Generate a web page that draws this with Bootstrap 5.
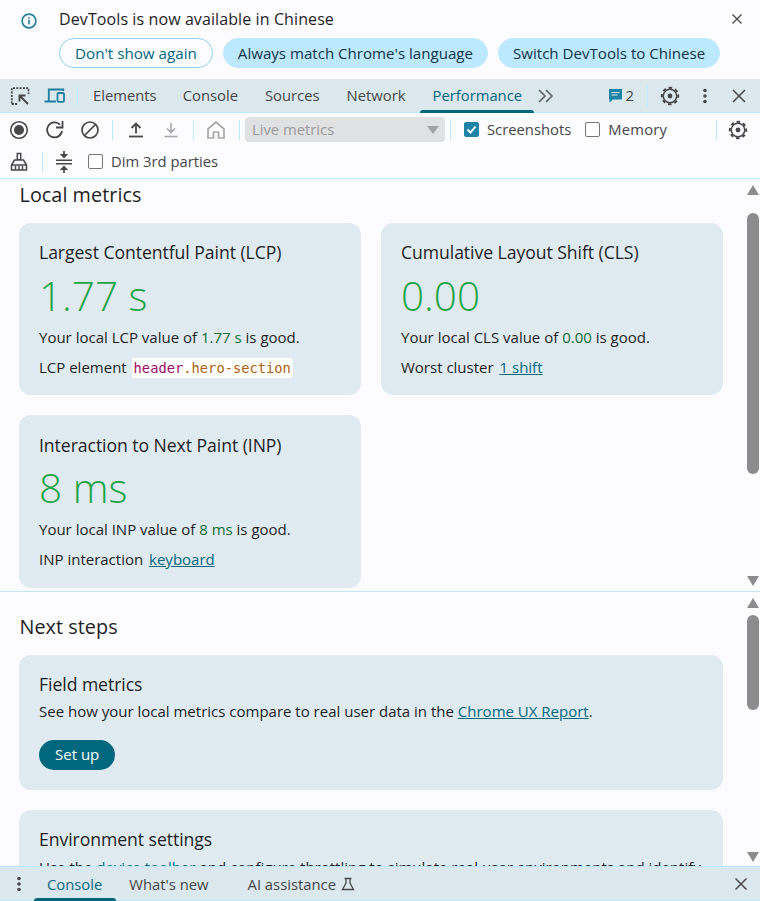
<!DOCTYPE html>
<html lang="en"><head><meta charset="utf-8"><title>DevTools</title>
<link rel="stylesheet" href="https://cdn.jsdelivr.net/npm/bootstrap@5.3.0/dist/css/bootstrap.min.css">
<style>
html,body{height:100%;overflow:hidden}
body{background:#fcfcff;color:#1f1f1f;font-family:"Open Sans","Noto Sans",sans-serif;font-size:15px}
svg{display:block;flex:none}
.sprite{position:absolute}
.shell{height:901px;width:760px}
.infobar{height:79px;padding:8px 0 0 20px}
.info-col{padding-left:21px}
.info-close{margin-right:16px}
.info-text{font-size:16px;line-height:22px;letter-spacing:.1px}
.pill-row{column-gap:10px}
.pill{height:30px;border-radius:15px;padding:0 14px;font-size:15.1px;line-height:29px;border:1px solid #bce9ff;background:#bce9ff;color:#12333f;white-space:nowrap}
.pill-outline{padding:0 15px;background:transparent;border-color:#8dd3f2;color:#00677e;font-size:15.2px}
.tabstrip{height:34px;background:#dbe8ee;border-bottom:1px solid #bce9ff;flex:none}
.tabname{font-size:14.8px;color:#474747;white-space:nowrap;line-height:33px;height:33px;position:relative}
.tabname.is-on{color:#00677e}
.tabname.is-on::after{content:"";position:absolute;left:-13px;right:-12px;bottom:-1px;height:3px;background:#00677d;border-radius:3px 3px 0 0}
.vsep{width:1px;height:20px;background:#bce9ff;flex:none}
.toolrow{height:33px;flex:none}
.toolrow-low{height:32px;flex:none;padding-bottom:1px}
.tool-label{font-size:14.8px;color:#474747;white-space:nowrap}
.label-wide{letter-spacing:.2px}
.fake-box{width:15px;height:15px;border:1px solid #747775;border-radius:2px;background:#fff;flex:none}
.fake-box.on{background:#1f83a6;border-color:#1f83a6;display:flex;align-items:center;justify-content:center}
.select-box{width:200px;height:25px;background:#e0e1e3;border-radius:4px;color:#9a9a9c;font-size:14.8px;padding:0 6px 0 7px}
.tri{width:0;height:0;border-left:6px solid transparent;border-right:6px solid transparent;border-top:8px solid #a1a1a1}
.toolwrap{border-bottom:1px solid #bce9ff;height:66px;flex:none}
.pane{overflow:hidden;flex:none}
.pane-a{height:413px;border-bottom:1px solid #c3e6f5}
.pane-b{height:274px}
.pane-body{flex:1;min-width:0;padding-left:19px;overflow:hidden}
.sbar{width:37px;flex:none;padding-left:24px;padding-right:1px}
.thumb{width:12px;background:#8c8c8c;border-radius:6px;flex:none}
.thumb-a{height:261px;margin-top:18px}
.thumb-b{height:95px;margin-top:7px}
.up,.dn{width:0;height:0;border-left:6.5px solid transparent;border-right:6.5px solid transparent;flex:none}
.up{border-bottom:10px solid #8c8c8c;margin-top:6px}
.dn{border-top:10px solid #8c8c8c;margin-top:auto;margin-bottom:5px}
.dn-b{margin-bottom:4px}
.heading{font-size:19.8px;line-height:26px;color:#1f1f1f;padding-left:.5px;letter-spacing:.05px}
.heading-a{margin-top:3px}
.heading-b{margin-top:22px}
.metric-grid{display:grid;grid-template-columns:342px 342px;gap:20px;width:704px;margin-top:15px}
.tile{background:#dfebf1;border-radius:12px;padding:17px 20px 0;height:172px}
.tile-low{height:173px;padding-top:18px}
.tile-low .big-val{margin-top:6px}
.tile-field{width:704px;height:135px;margin-top:15px}
.tile-env{width:704px;height:120px;margin-top:20px}
.tile-title{font-size:17.6px;line-height:24px;letter-spacing:-.05px;white-space:nowrap}
.big-val{font-size:40.500px;font-weight:350;line-height:50px;color:#1ea446;margin-top:7px}
.tile-line{font-size:15px;line-height:20px;white-space:nowrap;overflow:visible}
.line-a{margin-top:6px}
.line-b{margin-top:10px}
.line-c{margin-top:5px}
.line-clip{margin-top:6px;overflow:hidden}
.good{color:#136c2e}
.dlink{color:#00677e;text-decoration:underline;margin-left:2px}
.dlink-flush{margin-left:0}
.codechip{background:#fff;border-radius:3px;padding:2px;font:13.75px/18px "DejaVu Sans Mono",monospace;margin-left:1px}
.code-tag{color:#9c0d62}
.code-cls{color:#ad5f0c}
.setup{display:inline-block;height:30px;border-radius:15px;background:#00677e;color:#fff;padding:0 16px;font-size:15px;line-height:29px;margin-top:19px}
.drawer{height:35px;background:#dbe8ee;border-top:1px solid #bce9ff;border-bottom:1px solid #bce9ff;flex:none}
.drawer .tabname{line-height:35px}
.drawer .tabname.is-on::after{left:-13px;right:-14px}
.gl3{margin-left:3px}.gl5{margin-left:5px}.gl8{margin-left:8px}.gl9{margin-left:9px}.gl10{margin-left:10px}.gl11{margin-left:11px}.gl12{margin-left:12px}.gl13{margin-left:13px}.gl14{margin-left:14px}.gl15{margin-left:15px}.gl16{margin-left:16px}.gl17{margin-left:17px}.gl23{margin-left:23px}.gl25{margin-left:25px}.gl26{margin-left:26px}.gl27{margin-left:27px}.gl39{margin-left:39px}
.gr12{margin-right:12px}.gr13{margin-right:13px}.gr14{margin-right:14px}
</style></head>
<body>
<div class="shell d-flex flex-column">
 <div class="infobar d-flex flex-shrink-0">
  <svg width="18" height="18" viewBox="0 0 18 18" class="mt-1"><circle cx="9" cy="9" r="6.900" fill="none" stroke="#1f7f9d" stroke-width="1.600"/><rect x="8.200" y="8" width="1.600" height="4.400" fill="#1f7f9d"/><rect x="8.200" y="5.300" width="1.600" height="1.600" fill="#1f7f9d"/></svg>
  <div class="flex-grow-1 info-col">
   <div class="d-flex justify-content-between align-items-center"><span class="info-text">DevTools is now available in Chinese</span>
    <svg width="14" height="14" viewBox="0 0 14 14" class="info-close"><path d="M2.500 2.500l9 9m0-9l-9 9" stroke="#474747" stroke-width="1.300" fill="none"/></svg></div>
   <div class="d-flex mt-2 pill-row"><span class="pill pill-outline">Don't show again</span><span class="pill">Always match Chrome's language</span><span class="pill">Switch DevTools to Chinese</span></div>
  </div>
 </div>
 <div class="tabstrip d-flex align-items-center">
  <svg width="20" height="20" viewBox="0 0 20 20" class="gl10"><path d="M1.800 17.500V2.200H18.500V8M1.800 18H8" stroke="#474747" stroke-width="1.800" fill="none" stroke-dasharray="2 1.300"/><path d="M18 18L10 10M9.500 15.500V9.500h6" stroke="#474747" stroke-width="1.900" fill="none"/></svg>
  <svg width="21" height="20" viewBox="0 0 21 20" class="gl14"><path d="M4.800 15V3.500h14.500V5M.5 15.500H12" stroke="#1f7f9d" stroke-width="1.800" fill="none"/><rect x="13.500" y="7" width="6.500" height="8.800" rx="1" fill="none" stroke="#1f7f9d" stroke-width="1.800"/></svg>
  <span class="vsep gl12"></span>
  <span class="tabname gl15">Elements</span>
  <span class="tabname gl26">Console</span>
  <span class="tabname gl27">Sources</span>
  <span class="tabname gl27">Network</span>
  <span class="tabname is-on gl27">Performance</span>
  <svg width="18" height="16" viewBox="0 0 18 16" class="gl15"><path d="M2 2L8 8l-6 6M9 2L15 8l-6 6" stroke="#5f6368" stroke-width="1.600" fill="none"/></svg>
  <svg width="15" height="15" viewBox="0 0 15 15" class="ms-auto"><path d="M1 1h13v10.500H5L1.500 14.500V11.500H1z" fill="#1f83a6"/><path d="M3.500 4.500h8M3.500 7h6" stroke="#dbe8ee" stroke-width="1.200"/></svg>
  <span class="tabname gl3 gr13">2</span>
  <span class="vsep"></span>
  <svg width="20" height="20" viewBox="0 0 20 20" class="gl12"><use href="#gearIcon"/></svg>
  <svg width="4" height="16" viewBox="0 0 4 16" class="gl23"><circle cx="2" cy="2.500" r="1.800" fill="#474747"/><circle cx="2" cy="8" r="1.800" fill="#474747"/><circle cx="2" cy="13.500" r="1.800" fill="#474747"/></svg>
  <svg width="14" height="14" viewBox="0 0 14 14" class="gl25 gr14"><path d="M1 1l12 12m0-12l-12 12" stroke="#474747" stroke-width="1.500" fill="none"/></svg>
 </div>
 <div class="toolwrap">
  <div class="toolrow d-flex align-items-center">
   <svg width="20" height="20" viewBox="0 0 20 20" class="gl9"><circle cx="10" cy="10" r="8.300" fill="none" stroke="#474747" stroke-width="1.600"/><circle cx="10" cy="10" r="5" fill="#474747"/></svg>
   <svg width="20" height="20" viewBox="0 0 20 20" class="gl16"><path d="M17 11a7.500 7.500 0 1 1-2-6.300" stroke="#474747" stroke-width="1.800" fill="none"/><path d="M17.500 1v6.500H11" stroke="#474747" stroke-width="1.800" fill="none"/></svg>
   <svg width="20" height="20" viewBox="0 0 20 20" class="gl15"><circle cx="10" cy="10" r="8" fill="none" stroke="#474747" stroke-width="1.700"/><path d="M4.500 15.500l11-11" stroke="#474747" stroke-width="1.700"/></svg>
   <span class="vsep gl12"></span>
   <svg width="18" height="18" viewBox="0 0 18 18" class="gl14"><path d="M9 12.500V3M4.500 7L9 2.500 13.500 7" stroke="#474747" stroke-width="1.800" fill="none"/><path d="M2 15.500h14" stroke="#474747" stroke-width="1.800"/></svg>
   <svg width="18" height="18" viewBox="0 0 18 18" class="gl17"><path d="M9 2v9.500M5 7.500l4 4 4-4" stroke="#a8a8a8" stroke-width="1.600" fill="none"/><path d="M2.500 15.500h13" stroke="#a8a8a8" stroke-width="1.600"/></svg>
   <span class="vsep gl13"></span>
   <svg width="20" height="20" viewBox="0 0 20 20" class="gl12"><path d="M2 9L10 2l8 7v9h-5.500v-6h-5v6H2z" fill="none" stroke="#a8a8a8" stroke-width="1.700"/></svg>
   <span class="vsep gl13"></span>
   <div class="select-box d-flex align-items-center justify-content-between gl5">Live metrics<span class="tri"></span></div>
   <span class="vsep gl5"></span>
   <span class="fake-box on gl13"><svg width="11" height="11" viewBox="0 0 11 11"><path d="M1.500 5.500l3 3 5-6" stroke="#fff" stroke-width="1.900" fill="none"/></svg></span>
   <span class="tool-label gl8">Screenshots</span>
   <span class="fake-box gl14"></span>
   <span class="tool-label label-wide gl8">Memory</span>
   <span class="vsep ms-auto"></span>
   <svg width="20" height="20" viewBox="0 0 20 20" class="gl11 gr12"><use href="#gearIcon"/></svg>
  </div>
  <div class="toolrow-low d-flex align-items-center">
   <svg width="20" height="20" viewBox="0 0 20 20" class="gl9"><path d="M8.300 1.500h3.400v6.300H8.300zM5.500 8h9l3 5v5h-15v-5zM2.500 13h15" fill="none" stroke="#474747" stroke-width="1.500"/><path d="M6.500 14v4M10 14v4M13.500 14v4" stroke="#474747" stroke-width="1.500"/></svg>
   <span class="vsep gl13"></span>
   <svg width="20" height="24" viewBox="0 0 20 24" class="gl11"><path d="M2 10.300h16M2 13.700h16" stroke="#474747" stroke-width="1.400"/><path d="M10 1v4" stroke="#474747" stroke-width="1.700"/><path d="M5.800 4h8.400L10 8.500zM5.800 20h8.400L10 15.500z" fill="#474747"/><path d="M10 19v4" stroke="#474747" stroke-width="1.700"/></svg>
   <span class="fake-box gl14"></span>
   <span class="tool-label gl8">Dim 3rd parties</span>
  </div>
 </div>
 <div class="pane pane-a d-flex">
  <div class="pane-body">
   <div class="heading heading-a">Local metrics</div>
   <div class="metric-grid">
    <div class="tile">
     <div class="tile-title">Largest Contentful Paint (LCP)</div>
     <div class="big-val">1.77 s</div>
     <div class="tile-line line-a">Your local LCP value of <span class="good">1.77 s</span> is good.</div>
     <div class="tile-line line-b">LCP element <span class="codechip"><span class="code-tag">header</span><span class="code-cls">.hero-section</span></span></div>
    </div>
    <div class="tile">
     <div class="tile-title">Cumulative Layout Shift (CLS)</div>
     <div class="big-val">0.00</div>
     <div class="tile-line line-a">Your local CLS value of <span class="good">0.00</span> is good.</div>
     <div class="tile-line line-b">Worst cluster <span class="dlink">1 shift</span></div>
    </div>
    <div class="tile tile-low">
     <div class="tile-title">Interaction to Next Paint (INP)</div>
     <div class="big-val">8 ms</div>
     <div class="tile-line line-a">Your local INP value of <span class="good">8 ms</span> is good.</div>
     <div class="tile-line line-b">INP interaction <span class="dlink">keyboard</span></div>
    </div>
   </div>
  </div>
  <div class="sbar d-flex flex-column">
   <span class="up"></span>
   <span class="thumb thumb-a"></span>
   <span class="dn"></span>
  </div>
 </div>
 <div class="pane pane-b d-flex">
  <div class="pane-body">
   <div class="heading heading-b">Next steps</div>
   <div class="tile tile-field">
    <div class="tile-title">Field metrics</div>
    <div class="tile-line line-c">See how your local metrics compare to real user data in the <span class="dlink dlink-flush">Chrome UX Report</span>.</div>
    <span class="setup">Set up</span>
   </div>
   <div class="tile tile-env">
    <div class="tile-title">Environment settings</div>
    <div class="tile-line line-clip">Use the <span class="dlink dlink-flush">device toolbar</span> and configure throttling to simulate real user environments and identify</div>
   </div>
  </div>
  <div class="sbar d-flex flex-column">
   <span class="up"></span>
   <span class="thumb thumb-b"></span>
   <span class="dn dn-b"></span>
  </div>
 </div>
 <div class="drawer d-flex align-items-center">
  <svg width="4" height="16" viewBox="0 0 4 16" class="gl17"><circle cx="2" cy="2.500" r="1.800" fill="#474747"/><circle cx="2" cy="8" r="1.800" fill="#474747"/><circle cx="2" cy="13.500" r="1.800" fill="#474747"/></svg>
  <span class="tabname is-on gl26">Console</span>
  <span class="tabname gl27">What's new</span>
  <span class="tabname gl39">AI assistance</span>
  <svg width="14" height="14" viewBox="0 0 14 14" class="gl5"><path d="M3.500 1.500h7M5 1.500V6L1.500 12.500h11L9 6V1.500" fill="none" stroke="#474747" stroke-width="1.300"/></svg>
  <svg width="14" height="14" viewBox="0 0 14 14" class="ms-auto gr12"><path d="M1.500 1.500l11 11m0-11l-11 11" stroke="#474747" stroke-width="1.500" fill="none"/></svg>
 </div>
</div>
<svg width="0" height="0" class="sprite"><defs><g id="gearIcon"><circle cx="10" cy="10" r="8.200" fill="none" stroke="#474747" stroke-width="2" stroke-dasharray="3.400 3.040" transform="rotate(-11 10 10)"/><circle cx="10" cy="10" r="6.700" fill="none" stroke="#474747" stroke-width="1.400"/><circle cx="10" cy="10" r="2.400" fill="#474747"/></g></defs></svg>
</body></html>
